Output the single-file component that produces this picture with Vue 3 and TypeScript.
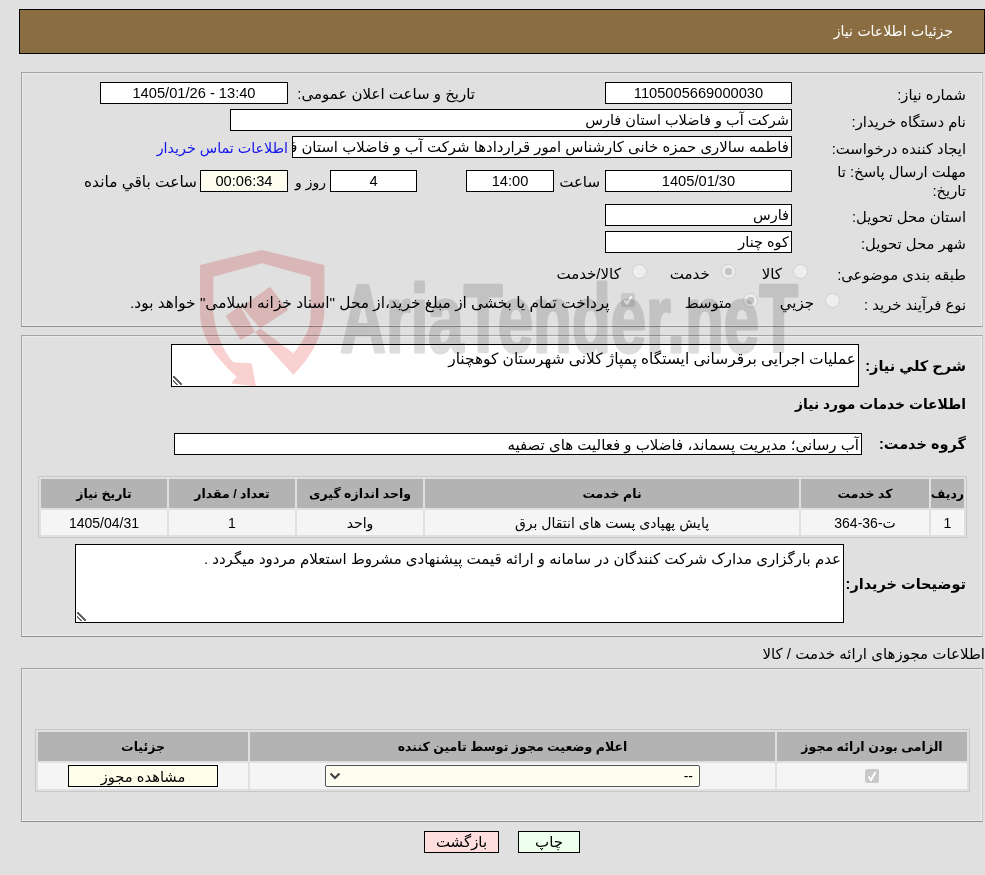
<script setup lang="ts">
const services = [{ idx: '1', code: 'ت-36-364', name: 'پایش پهپادی پست های انتقال برق', unit: 'واحد', qty: '1', date: '1405/04/31' }]
</script>

<template>
  <div class="page" dir="rtl">
    <header class="banner">جزئیات اطلاعات نیاز</header>

    <section class="panel p1">
      <div class="row r1">
        <label class="lbl">شماره نیاز:</label>
        <div class="box w187 center num">1105005669000030</div>
        <span class="lbl2">تاریخ و ساعت اعلان عمومی:</span>
        <div class="box w188 center num">13:40 - 1405/01/26</div>
      </div>
      <div class="row r2">
        <label class="lbl">نام دستگاه خریدار:</label>
        <div class="box w562">شرکت آب و فاضلاب استان فارس</div>
      </div>
      <div class="row r3">
        <label class="lbl">ایجاد کننده درخواست:</label>
        <div class="box w500">فاطمه سالاری حمزه خانی کارشناس امور قراردادها شرکت آب و فاضلاب استان فارس</div>
        <a class="link">اطلاعات تماس خریدار</a>
      </div>
      <div class="row r4">
        <label class="lbl wrap">مهلت ارسال پاسخ: تا تاریخ:</label>
        <div class="box w187 center num">1405/01/30</div>
        <span class="txt t-saat">ساعت</span>
        <div class="box w88 center num">14:00</div>
        <div class="box w87 center num ml">4</div>
        <span class="txt t-roz">روز و</span>
        <div class="box w88 center num yellow">00:06:34</div>
        <span class="txt t-rem">ساعت باقي مانده</span>
      </div>
      <div class="row r5">
        <label class="lbl">استان محل تحویل:</label>
        <div class="box w187">فارس</div>
      </div>
      <div class="row r6">
        <label class="lbl">شهر محل تحویل:</label>
        <div class="box w187">کوه چنار</div>
      </div>
      <div class="row r7">
        <label class="lbl">طبقه بندی موضوعی:</label>
        <span class="opt o1"><i class="radio"></i><span>کالا</span></span>
        <span class="opt o2"><i class="radio on"></i><span>خدمت</span></span>
        <span class="opt o3"><i class="radio"></i><span>کالا/خدمت</span></span>
      </div>
      <div class="row r8">
        <label class="lbl">نوع فرآیند خرید :</label>
        <span class="opt o4"><i class="radio"></i><span>جزيي</span></span>
        <span class="opt o5"><i class="radio on"></i><span>متوسط</span></span>
        <span class="opt o6"><i class="check"><svg width="14" height="14" viewBox="0 0 14 14"><path d="M3.5 7.5 L6 10.5 L10.5 3.5" fill="none" stroke="#fff" stroke-width="2" /></svg></i><span class="long">پرداخت تمام یا بخشی از مبلغ خرید،از محل "اسناد خزانه اسلامی" خواهد بود.</span></span>
      </div>
    </section>

    <section class="panel p2">
      <div class="row desc">
        <label class="bold blbl">شرح کلي نیاز:</label>
        <div class="area a1">عملیات اجرایی برقرسانی ایستگاه پمپاژ کلانی شهرستان کوهچنار<i class="grip"></i></div>
      </div>
      <div class="bold subtitle">اطلاعات خدمات مورد نیاز</div>
      <div class="row group">
        <label class="bold blbl2">گروه خدمت:</label>
        <div class="box w688">آب رسانی؛ مدیریت پسماند، فاضلاب و فعالیت های تصفیه</div>
      </div>
      <table class="grid g1">
        <thead>
          <tr><th class="c1">ردیف</th><th class="c2">کد خدمت</th><th class="c3">نام خدمت</th><th class="c4">واحد اندازه گیری</th><th class="c5">تعداد / مقدار</th><th class="c6">تاریخ نیاز</th></tr>
        </thead>
        <tbody>
          <tr v-for="s in services" :key="s.idx"><td>{{ s.idx }}</td><td>{{ s.code }}</td><td>{{ s.name }}</td><td>{{ s.unit }}</td><td>{{ s.qty }}</td><td>{{ s.date }}</td></tr>
        </tbody>
      </table>
      <div class="row notes">
        <label class="bold blbl3">توضیحات خریدار:</label>
        <div class="area a2">عدم بارگزاری مدارک شرکت کنندگان در سامانه و ارائه قیمت پیشنهادی مشروط استعلام مردود میگردد .<i class="grip"></i></div>
      </div>
    </section>

    <div class="caption">اطلاعات مجوزهای ارائه خدمت / کالا</div>

    <section class="panel p3">
      <table class="grid g2">
        <thead>
          <tr><th class="d1">الزامی بودن ارائه مجوز</th><th class="d2">اعلام وضعیت مجوز توسط تامین کننده</th><th class="d3">جزئیات</th></tr>
        </thead>
        <tbody>
          <tr>
            <td><i class="check big"><svg width="14" height="14" viewBox="0 0 14 14"><path d="M3.5 7.5 L6 11 L10.5 3" fill="none" stroke="#fff" stroke-width="2" /></svg></i></td>
            <td><div class="select"><span>--</span><svg width="12" height="8" viewBox="0 0 12 8"><path d="M1.5 1.5 L6 6 L10.5 1.5" fill="none" stroke="#444" stroke-width="2.2" /></svg></div></td>
            <td><button class="btn view" type="button">مشاهده مجوز</button></td>
          </tr>
        </tbody>
      </table>
    </section>

    <div class="actions">
      <button class="btn print" type="button">چاپ</button>
      <button class="btn back" type="button">بازگشت</button>
    </div>

    <svg class="mark" width="620" height="141" viewBox="0 0 620 141" aria-hidden="true">
      <g transform="scale(0.3333)" fill="#f9d1d1">
        <path d="M215 15 L403 60 L403 210 C395 280 360 340 310 390 L195 262 L210 250 L310 325 C340 290 362 250 362 210 L362 95 L215 55 L70 95 L70 200 C75 260 100 320 130 352 L185 355 L198 425 L123 415 L140 395 C80 340 30 280 30 200 L30 60 Z" />
        <path d="M107 212 L150 182 L195 260 L152 285 Z" />
        <path d="M155 185 L240 125 L295 195 L210 250 Z" />
      </g>
      <text x="150" y="107" class="mark-text" textLength="458" lengthAdjust="spacingAndGlyphs">AriaTender.neT</text>
    </svg>
  </div>
</template>

<style>
html, body { margin: 0; background: #e0e0e0; }
</style>

<style scoped>
.page { position: relative; width: 985px; height: 875px; overflow: hidden; background: #e0e0e0; font-family: "Liberation Sans", "DejaVu Sans", sans-serif; font-size: 15px; color: #000; box-sizing: border-box; padding-top: 9px; }
.mark { position: absolute; left: 190px; top: 245px; z-index: 5; mix-blend-mode: multiply; pointer-events: none; direction: ltr; }
.mark-text { direction: ltr; unicode-bidi: embed; text-anchor: start; font-family: "Liberation Sans", sans-serif; font-weight: 700; font-size: 96px; fill: #dddddd; stroke: #dddddd; stroke-width: 3px; stroke-linejoin: round; }
.banner { position: relative; box-sizing: border-box; height: 45px; margin-left: 19px; border: 1px solid #000; background: #8b6d42; color: #fff; font-family: "DejaVu Sans", sans-serif; font-size: 14px; line-height: 43px; padding-right: 31px; }
.panel { position: relative; box-sizing: border-box; margin-left: 21px; margin-right: 2px; border: 1px solid #a3a3a3; border-right-color: #c6c6c6; border-bottom-color: #8f8f8f; box-shadow: inset 0 0 0 1px #ececec; }
.p1 { height: 255px; margin-top: 18px; }
.p2 { height: 302px; margin-top: 8px; }
.p3 { height: 154px; margin-top: 6px; }
.row { display: flex; align-items: center; padding-right: 16px; position: relative; }
.lbl { width: 174px; flex: none; box-sizing: border-box; font-size: 14.8px; white-space: nowrap; padding-top: 2px; }
.lbl.wrap { line-height: 19px; white-space: normal; padding-left: 16px; }
.box { position: relative; box-sizing: border-box; height: 22px; line-height: 21px; background: #fff; border: 1px solid #000; padding: 0 2px; white-space: nowrap; overflow: hidden; flex: none; font-size: 14.5px; }
.center { text-align: center; }
.num { font-size: 14.67px; }
.yellow { background: #fdfdf0; }
.w187 { width: 187px; }
.w188 { width: 188px; }
.w562 { width: 562px; }
.w500 { width: 500px; font-size: 14.9px; }
.w88 { width: 88px; }
.w87 { width: 87px; }
.w688 { width: 688px; font-size: 15px; }
.r1 { margin-top: 9px; }
.r2 { margin-top: 5px; }
.r3 { margin-top: 5px; }
.r4 { margin-top: 9px; height: 28px; }
.r5 { margin-top: 9px; }
.r6 { margin-top: 5px; }
.r7 { margin-top: 10px; height: 20px; }
.r8 { margin-top: 9px; height: 22px; }
.lbl2 { flex: none; box-sizing: border-box; width: 317px; padding-right: 130px; padding-top: 1px; white-space: nowrap; }
.link { color: #1212ee; margin-right: 4px; white-space: nowrap; font-size: 14.3px; padding-top: 2px; }
.txt { white-space: nowrap; flex: none; padding-top: 1px; }
.t-saat { box-sizing: border-box; width: 51px; padding-right: 5px; }
.ml { margin-right: 49px; }
.t-roz { box-sizing: border-box; width: 42px; padding-right: 4px; font-size: 14px; }
.t-rem { margin-right: 3px; font-size: 15.4px; }
.opt { display: flex; align-items: center; white-space: nowrap; flex: none; }
.long { font-size: 15.4px; }
.radio { display: block; width: 15px; height: 15px; border-radius: 50%; box-sizing: border-box; background: #eeeeee; border: 1px solid #cfcfcf; margin-left: 11px; margin-top: -5px; flex: none; }
.radio.on { background: radial-gradient(circle, #c4c4c4 0 3.5px, #ededed 4px); }
.o1 { margin-right: -16px; padding-top: 1px; }
.o2 { margin-right: 26px; padding-top: 1px; }
.o3 { margin-right: 23px; padding-top: 1px; }
.o4 { margin-right: -48px; }
.o5 { margin-right: 22px; }
.o6 { margin-right: 50px; }
.check { display: block; width: 14px; height: 14px; background: #c9c9c9; border-radius: 2px; margin-left: 11px; margin-top: -7px; flex: none; }
.check svg { display: block; }
.check.big { margin: 0 auto; }
.bold { font-weight: 700; font-size: 14.5px; }
.desc { margin-top: 8px; }
.blbl { width: 107px; flex: none; white-space: nowrap; }
.area { position: relative; box-sizing: border-box; flex: none; background: #fff; border: 1px solid #000; padding: 4px 2px 0; line-height: 20px; white-space: nowrap; }
.a1 { width: 688px; height: 43px; font-size: 15.4px; }
.a2 { width: 769px; height: 79px; font-size: 15px; }
.grip { position: absolute; left: 1px; bottom: 1px; width: 9px; height: 9px; background: linear-gradient(45deg, transparent 20%, #666 20% 32%, transparent 32% 44%, #666 44% 56%, transparent 56%); }
.subtitle { margin-top: 6px; padding-right: 16px; line-height: 22px; font-size: 13.9px; }
.group { margin-top: 18px; }
.blbl2 { width: 104px; flex: none; white-space: nowrap; }
.grid { position: relative; border-collapse: separate; border-spacing: 2px; background: #e0e0e0; border: 1px solid #c8c8c8; table-layout: fixed; font-size: 14px; }
.grid th { background: #b3b3b3; font-weight: 700; font-size: 12.5px; height: 29px; padding: 0; text-align: center; white-space: nowrap; }
.grid td { background: #f5f5f5; height: 25px; padding: 0; text-align: center; }
.g1 { width: 929px; margin: 21px 15px 0 0; }
.c1 { width: 33px; } .c2 { width: 128px; } .c3 { width: 374px; } .c4 { width: 126px; } .c5 { width: 126px; } .c6 { width: 126px; }
.notes { margin-top: 6px; }
.blbl3 { width: 122px; flex: none; white-space: nowrap; }
.caption { position: relative; height: 17px; line-height: 17px; margin-top: 8px; white-space: nowrap; font-size: 15px; }
.g2 { width: 935px; margin: 60px 12px 0 0; }
.g2 th { height: 29px; }
.g2 td { height: 26px; }
.d1 { width: 190px; } .d2 { width: 525px; } .d3 { width: 210px; }
.select { display: flex; align-items: center; justify-content: space-between; box-sizing: border-box; width: 375px; height: 22px; margin: 0 auto; padding: 0 4px 0 3px; background: #fdfdf0; border: 1px solid #555; border-radius: 2px; }
.select span { padding-right: 2px; }
.btn { font: inherit; box-sizing: border-box; border: 1px solid #000; height: 22px; padding: 0; color: #000; }
.view { width: 150px; background: #fdfdea; display: block; margin: 0 auto; font-size: 14.7px; }
.actions { position: relative; display: flex; justify-content: center; gap: 19px; margin-top: 9px; padding-left: 19px; }
.print { width: 62px; background: #eeffee; }
.back { width: 75px; background: #ffdede; }
</style>
